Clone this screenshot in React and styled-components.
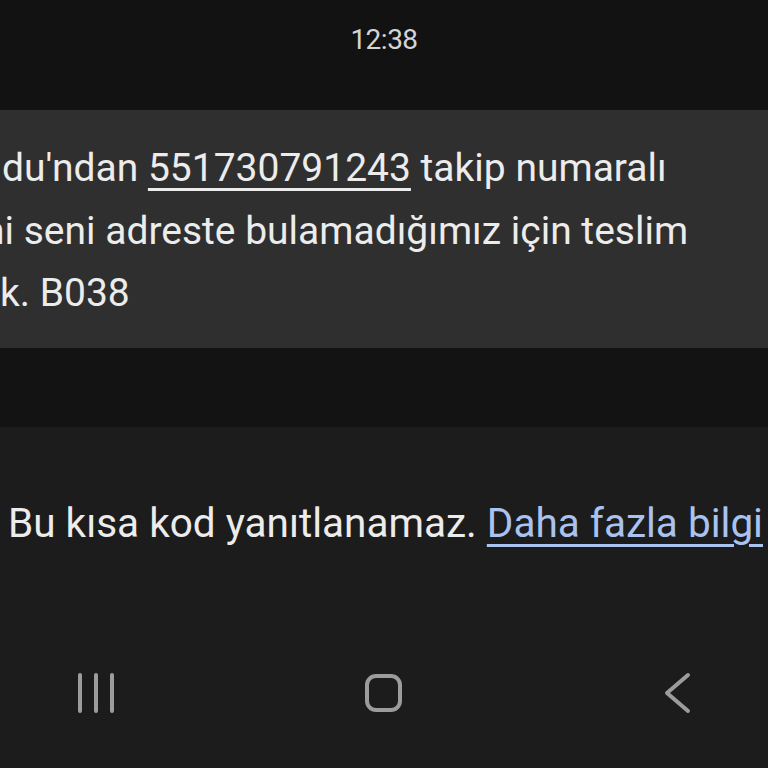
import styled, { createGlobalStyle } from 'styled-components'

const Global = createGlobalStyle`
	html, body {
		margin: 0;
		padding: 0;
		background: #121212;
	}
	body {
		font-family: Roboto, "Noto Sans", sans-serif;
	}
`

const Screen = styled.div`
	width: 768px;
	height: 768px;
	display: flex;
	flex-direction: column;
	overflow: hidden;
	background: #121212;
`
const StatusBar = styled.div`
	height: 110px;
	display: flex;
	justify-content: center;
	padding-top: 23px;
	box-sizing: border-box;
	font-size: 28px;
	color: #d4d4d4;
	letter-spacing: -0.5px;
`
const Bubble = styled.div`
	height: 238px;
	background: #2f2f2f;
	display: flex;
	flex-direction: column;
	padding-top: 35px;
	box-sizing: border-box;
	overflow: hidden;
`
const Line = styled.div`
	height: 62.5px;
	font-size: 39px;
	line-height: 46px;
	color: #ececec;
	white-space: nowrap;
	margin-left: ${(p) => p.$shift || 0}px;
`
const Tracking = styled.span`
	text-decoration: underline;
	text-decoration-thickness: 3px;
	text-underline-offset: 7px;
`
const Gap = styled.div`
	height: 79px;
	background: #131313;
`
const Footer = styled.div`
	flex: 1;
	background: #1c1c1c;
	display: flex;
	flex-direction: column;
`
const Notice = styled.div`
	padding: 72px 0 0 8px;
	height: 200px;
	box-sizing: border-box;
	font-size: 40.5px;
	line-height: 48px;
	color: #ececec;
	white-space: nowrap;
`
const More = styled.span`
	color: #a9c3f0;
	text-decoration: underline;
	text-decoration-thickness: 3px;
	text-underline-offset: 7px;
`
const NavBar = styled.div`
	display: grid;
	grid-template-columns: repeat(3, 1fr);
	align-items: center;
	justify-items: center;
	padding-top: 44px;
`
const NavButton = styled.div`
	display: flex;
	align-items: center;
	justify-content: center;
	width: 60px;
	height: 44px;
	margin-left: ${(p) => p.$nudge || 0}px;
`

function Recents() {
	return (
		<svg width="40" height="42" viewBox="0 0 40 42">
			<g stroke="#9c9c9c" strokeWidth="4" strokeLinecap="round">
				<line x1="3" y1="3" x2="3" y2="39" />
				<line x1="19" y1="3" x2="19" y2="39" />
				<line x1="35" y1="3" x2="35" y2="39" />
			</g>
		</svg>
	)
}

function Home() {
	return (
		<svg width="40" height="40" viewBox="0 0 40 40">
			<rect x="3" y="3" width="33" height="34" rx="9" fill="none" stroke="#9c9c9c" strokeWidth="4" />
		</svg>
	)
}

function Back() {
	return (
		<svg width="32" height="44" viewBox="0 0 32 44">
			<polyline points="27,4 6,22 27,40" fill="none" stroke="#9c9c9c" strokeWidth="4" strokeLinecap="round" strokeLinejoin="round" />
		</svg>
	)
}

function App() {
	return (
		<>
			<Global />
			<Screen>
				<StatusBar>12:38</StatusBar>
				<Bubble>
					<Line $shift={2}>du'ndan <Tracking>551730791243</Tracking> takip numaralı</Line>
					<Line $shift={-17}>ni seni adreste bulamadığımız için teslim</Line>
					<Line $shift={0}>k. B038</Line>
				</Bubble>
				<Gap />
				<Footer>
					<Notice>
						Bu kısa kod yanıtlanamaz. <More>Daha fazla bilgi</More>
					</Notice>
					<NavBar>
						<NavButton $nudge={-62}><Recents /></NavButton>
						<NavButton><Home /></NavButton>
						<NavButton $nudge={74}><Back /></NavButton>
					</NavBar>
				</Footer>
			</Screen>
		</>
	)
}

export default App
